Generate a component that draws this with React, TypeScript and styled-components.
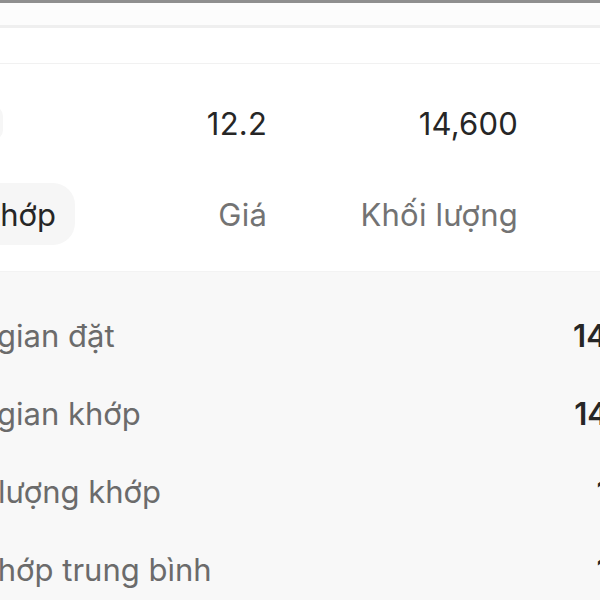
import React from 'react'
import styled, { createGlobalStyle } from 'styled-components'

const GlobalStyle = createGlobalStyle`
  body {
    margin: 0;
    background: #ffffff;
    font-family: Inter, "Noto Sans", sans-serif;
  }
`

const Screen = styled.div`
  width: 600px;
  height: 600px;
  overflow: hidden;
  display: flex;
  flex-direction: column;
  background: #ffffff;
`

const StatusStrip = styled.div`
  height: 22px;
  flex-shrink: 0;
  border-top: 3px solid #8f8f8f;
  background: #fcfcfc;
  border-bottom: 3px solid #efefef;
`

const SubBar = styled.div`
  height: 35px;
  flex-shrink: 0;
  border-bottom: 1px solid #f1f1f1;
`

const TableRow = styled.div<{ h: number; gapBelow?: number }>`
  display: grid;
  grid-template-columns: 230px 107px 251px;
  align-items: center;
  height: ${p => p.h}px;
  margin-bottom: ${p => p.gapBelow || 0}px;
  flex-shrink: 0;
  margin-left: -70px;
`

const Cell = styled.div<{ muted?: boolean }>`
  justify-self: end;
  font-size: 31px;
  letter-spacing: 0.2px;
  color: ${p => (p.muted ? '#737373' : '#262626')};
  white-space: nowrap;
`

const TagCell = styled.div`
  justify-self: end;
  width: 70px;
  height: 34px;
  border-radius: 10px;
  background: #f6f6f6;
  margin-right: 157px;
`

const HeaderPill = styled.div`
  justify-self: end;
  margin-right: 85px;
  padding: 0 19px;
  height: 62px;
  display: flex;
  align-items: center;
  border-radius: 22px;
  background: #f6f6f6;
  font-size: 31px;
  color: #262626;
  white-space: nowrap;
`

const DetailPanel = styled.div`
  flex: 1;
  background: #f8f8f8;
  padding-top: 24px;
  border-top: 1px solid #f3f3f3;
`

const DetailRow = styled.div`
  height: 78px;
  display: flex;
  align-items: center;
  justify-content: space-between;
  margin-left: -76px;
  margin-right: -99px;
`

const DetailLabel = styled.span`
  font-size: 31px;
  color: #6b6b6b;
  white-space: nowrap;
`

const DetailValue = styled.span`
  font-size: 31px;
  font-weight: 600;
  color: #262626;
  white-space: nowrap;
`

const details = [
  { label: 'Thời gian đặt', value: '14:25:10' },
  { label: 'Thời gian khớp', value: '14:25:12' },
  { label: 'Khối lượng khớp', value: '14,600' },
  { label: 'Giá khớp trung bình', value: '12,200' },
]

export default function App() {
  return (
    <Screen>
      <GlobalStyle />
      <StatusStrip />
      <SubBar />
      <TableRow h={118}>
        <TagCell />
        <Cell>12.2</Cell>
        <Cell>14,600</Cell>
      </TableRow>
      <TableRow h={64} gapBelow={25}>
        <HeaderPill>Thời gian khớp</HeaderPill>
        <Cell muted>Giá</Cell>
        <Cell muted>Khối lượng</Cell>
      </TableRow>
      <DetailPanel>
        {details.map(d => (
          <DetailRow key={d.label}>
            <DetailLabel>{d.label}</DetailLabel>
            <DetailValue>{d.value}</DetailValue>
          </DetailRow>
        ))}
      </DetailPanel>
    </Screen>
  )
}
